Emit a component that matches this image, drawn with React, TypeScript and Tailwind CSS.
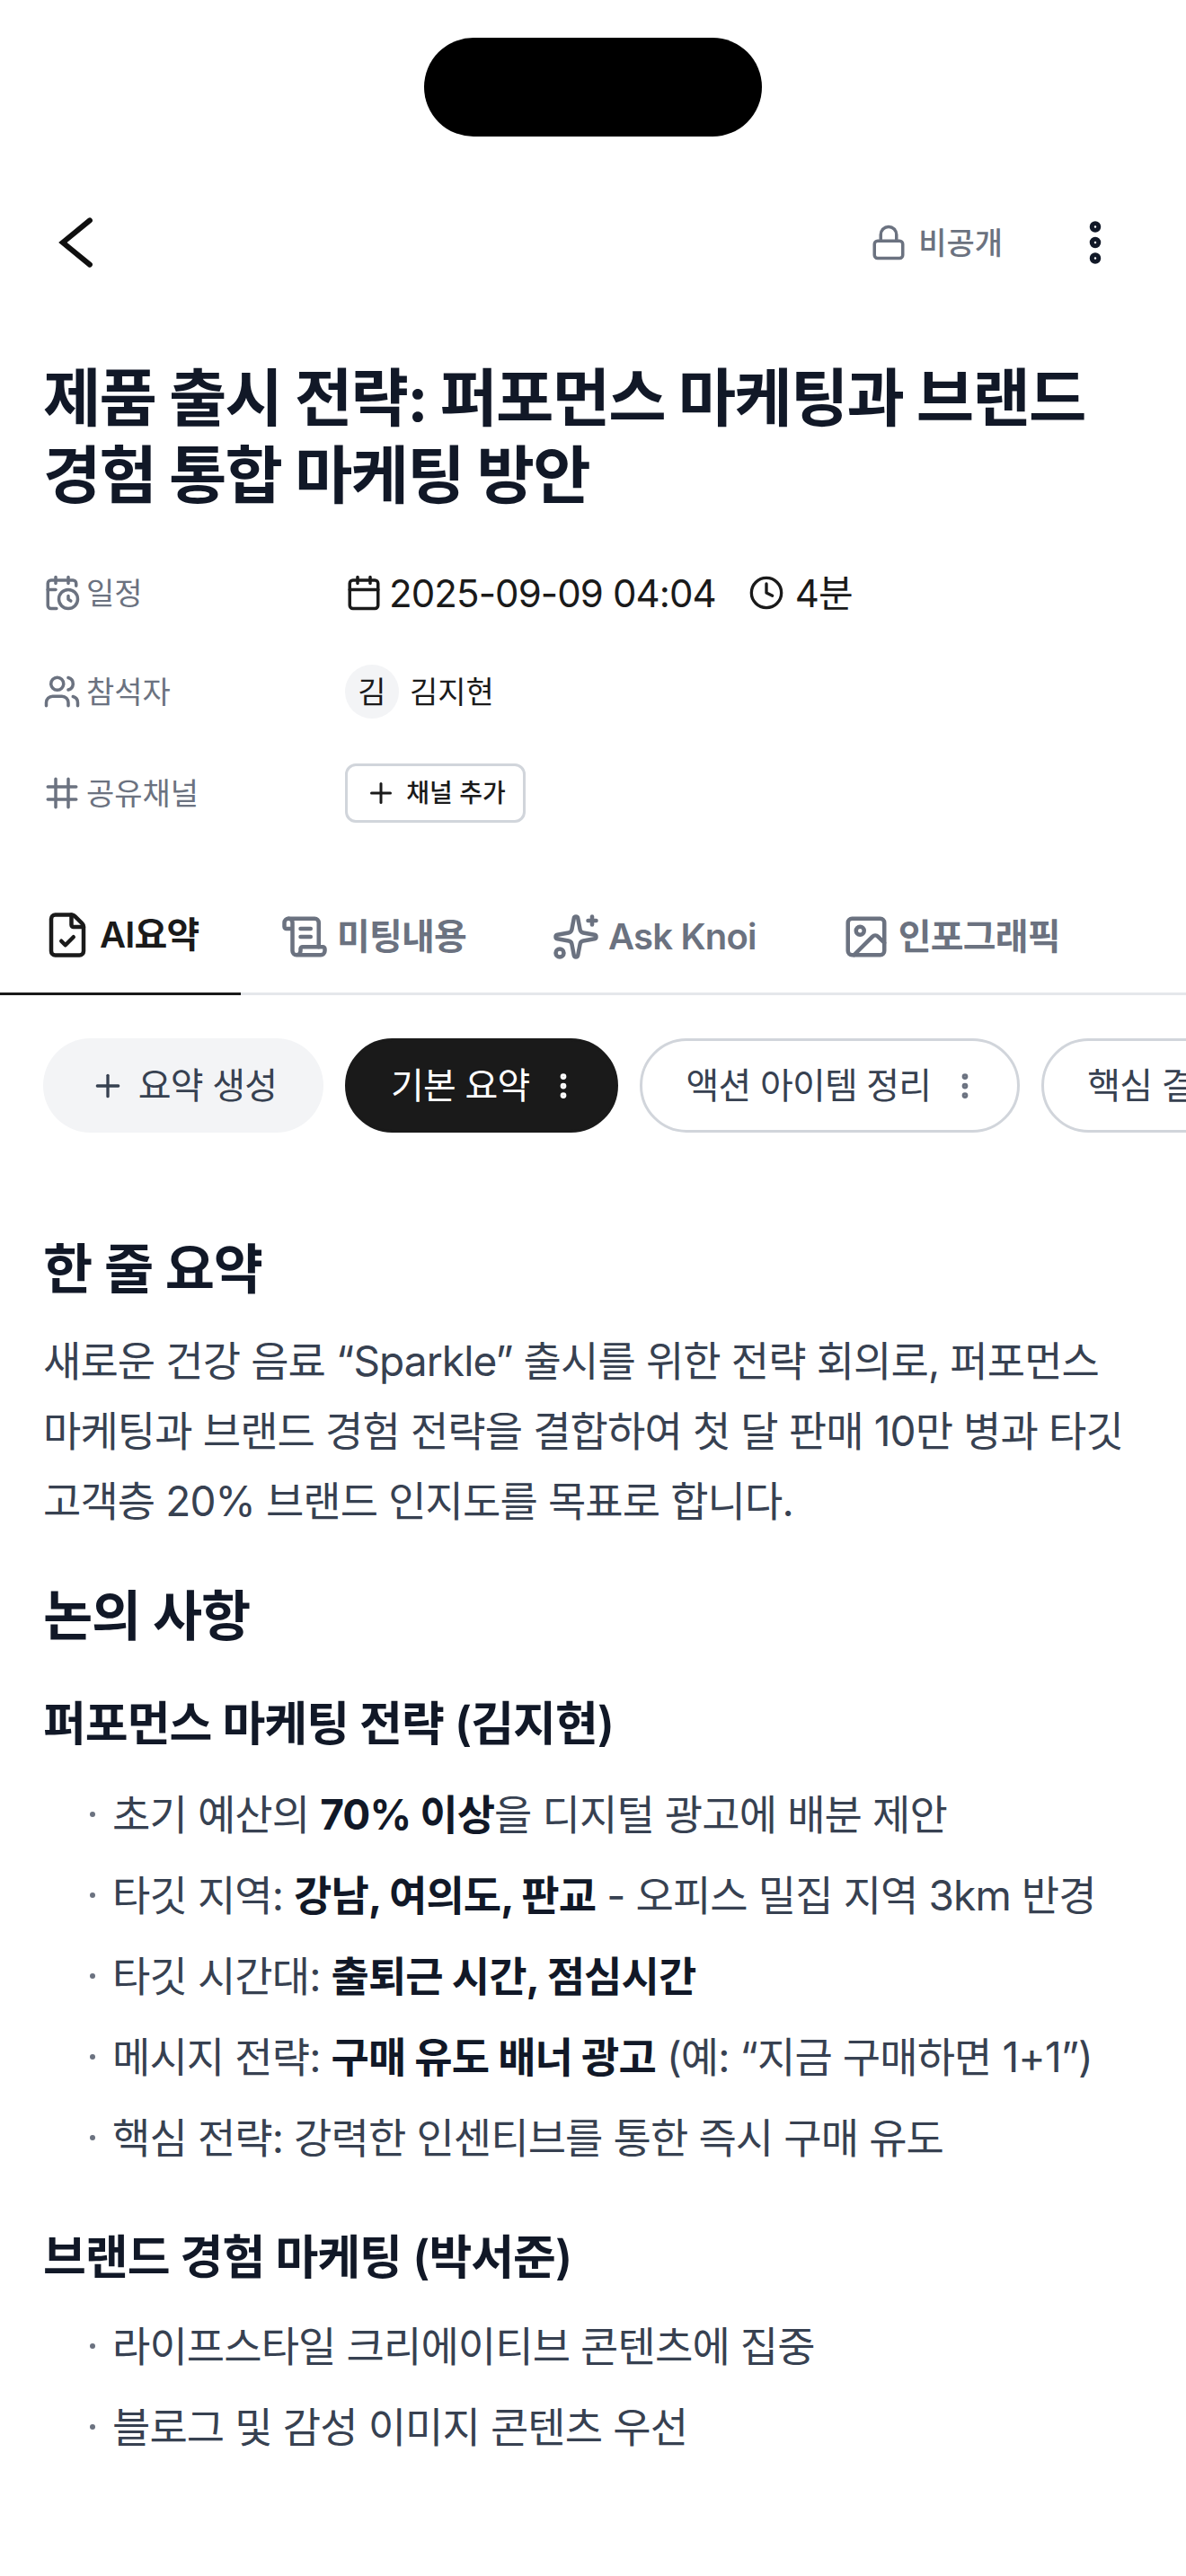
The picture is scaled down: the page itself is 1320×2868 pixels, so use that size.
import { Calendar, CalendarClock, Clock, EllipsisVertical, FileCheck, Image, Lock, Plus, ScrollText, Sparkles, Users } from "lucide-react";
import type { ReactNode } from "react";

const FONT = "font-['Inter','Noto_Sans_CJK_KR',sans-serif]";

function MetaRow({ icon, label, children, className = "" }: { icon: ReactNode; label: string; children: ReactNode; className?: string }) {
  return (
    <div className={`flex items-center ${className}`}>
      <div className="flex w-[336px] items-center gap-[6px] text-[34px] text-[#6b7280]">
        {icon}
        <span>{label}</span>
      </div>
      <div className="flex items-center">{children}</div>
    </div>
  );
}

function Tab({ icon, label, active = false, className = "" }: { icon: ReactNode; label: string; active?: boolean; className?: string }) {
  return (
    <div
      className={`flex h-[107px] items-center gap-[9px] pb-[24px] text-[40px] tracking-[-0.8px] font-semibold ${
        active ? "border-b-[3px] border-[#1a1a1a] text-[#1a1a1a]" : "text-[#6b7280]"
      } ${className}`}
    >
      {icon}
      <span>{label}</span>
    </div>
  );
}

function Chip({ label, active = false, className = "" }: { label: string; active?: boolean; className?: string }) {
  return (
    <div
      className={`flex h-[105px] shrink-0 items-center rounded-full border-[3px] pl-[48px] pr-[40px] text-[40px] tracking-[-0.8px] ${
        active ? "border-[#1a1a1a] bg-[#1a1a1a] text-white" : "border-[#d1d5db] text-[#374151]"
      } ${className}`}
    >
      <span>{label}</span>
      <EllipsisVertical size={36} strokeWidth={2.5} className={`ml-[20px] ${active ? "text-white" : "text-[#6b7280]"}`} />
    </div>
  );
}

function Bullet({ children }: { children: ReactNode }) {
  return (
    <li className="flex h-[90px] items-center pl-[100px] text-[46px] tracking-[-0.9px] text-[#374151]">
      <span className="mr-[19px] h-[6px] w-[6px] rounded-full bg-[#6b7280]" />
      <span className="whitespace-nowrap">{children}</span>
    </li>
  );
}

export default function App() {
  return (
    <div className={`relative h-[2868px] w-[1320px] overflow-hidden bg-white ${FONT}`}>
      <div className="flex justify-center pt-[42px]">
        <div className="h-[110px] w-[376px] rounded-[55px] bg-black" />
      </div>

      <header className="mt-[58px] flex h-[120px] items-center pl-[48px] pr-[48px]">
        <svg width="72" height="72" viewBox="0 0 24 24" fill="none" stroke="#0f0f0f" strokeWidth="2" strokeLinecap="round" strokeLinejoin="miter">
          <path d="M17.3 3.8 L7.3 12 L17.3 20.2" />
        </svg>
        <div className="ml-auto flex items-center gap-[12px] text-[34px] font-medium text-[#6b7280]">
          <Lock size={42} strokeWidth={2} />
          <span>비공개</span>
        </div>
        <EllipsisVertical size={60} strokeWidth={3} className="ml-[73px] mr-[23px] text-[#111827]" />
      </header>

      <h1 className="mt-[71px] px-[48px] text-[70px] font-bold leading-[86px] tracking-[-1.8px] text-[#111827]">
        제품 출시 전략: 퍼포먼스 마케팅과 브랜드
        <br />
        경험 통합 마케팅 방안
      </h1>

      <div className="mt-[57px] px-[48px]">
        <MetaRow className="h-[60px]" icon={<CalendarClock size={42} strokeWidth={2} />} label="일정">
          <Calendar size={42} strokeWidth={2} className="text-[#1a1a1a]" />
          <span className="ml-[7px] text-[42px] tracking-[-0.9px] text-[#1a1a1a]">2025-09-09 04:04</span>
          <Clock size={40} strokeWidth={2} className="ml-[36px] text-[#1a1a1a]" />
          <span className="ml-[12px] text-[42px] tracking-[-0.9px] text-[#1a1a1a]">4분</span>
        </MetaRow>
        <MetaRow className="mt-[50px] h-[60px]" icon={<Users size={42} strokeWidth={2} />} label="참석자">
          <div className="flex h-[60px] w-[60px] items-center justify-center rounded-full bg-[#f3f4f6] text-[34px] text-[#1a1a1a]">김</div>
          <span className="ml-[12px] text-[34px] text-[#1a1a1a]">김지현</span>
        </MetaRow>
        <MetaRow
          className="mt-[50px] h-[66px]"
          icon={
            <svg width="42" height="42" viewBox="0 0 24 24" fill="none" stroke="currentColor" strokeWidth="2" strokeLinecap="round">
              <path d="M8 3v18M16 3v18M3 8h18M3 16h18" />
            </svg>
          }
          label="공유채널"
        >
          <div className="flex h-[66px] w-[201px] items-center justify-center gap-[10px] rounded-[12px] border-[3px] border-[#d1d5db] text-[28px] font-medium text-[#1a1a1a]">
            <Plus size={36} strokeWidth={2} />
            <span>채널 추가</span>
          </div>
        </MetaRow>
      </div>

      <nav className="mt-[85px] flex h-[107px] items-start border-b-[3px] border-[#e5e7eb]">
        <Tab active className="w-[268px] pl-[48px]" icon={<FileCheck size={54} strokeWidth={2} />} label="AI요약" />
        <Tab className="ml-[44px]" icon={<ScrollText size={54} strokeWidth={2} />} label="미팅내용" />
        <Tab className="ml-[95px]" icon={<Sparkles size={54} strokeWidth={2} />} label="Ask Knoi" />
        <Tab className="ml-[95px]" icon={<Image size={54} strokeWidth={2} />} label="인포그래픽" />
      </nav>

      <div className="mt-[48px] flex gap-[24px] overflow-hidden pl-[48px]">
        <div className="flex h-[105px] w-[312px] shrink-0 items-center justify-center gap-[14px] rounded-full bg-[#f3f4f6] text-[40px] tracking-[-0.8px] text-[#374151]">
          <Plus size={40} strokeWidth={2} />
          <span>요약 생성</span>
        </div>
        <Chip active label="기본 요약" />
        <Chip label="액션 아이템 정리" />
        <Chip label="핵심 결정 사항" />
      </div>

      <main className="mt-[107px] px-[48px]">
        <h2 className="text-[60px] font-semibold leading-[90px] tracking-[-1.2px] text-[#111827]">한 줄 요약</h2>
        <p className="mt-[18px] text-[46px] leading-[78px] tracking-[-0.9px] text-[#374151]">
          새로운 건강 음료 “Sparkle” 출시를 위한 전략 회의로, 퍼포먼스
          <br />
          마케팅과 브랜드 경험 전략을 결합하여 첫 달 판매 10만 병과 타깃
          <br />
          고객층 20% 브랜드 인지도를 목표로 합니다.
        </p>
        <h2 className="mt-[44px] text-[60px] font-semibold leading-[90px] tracking-[-1.2px] text-[#111827]">논의 사항</h2>
        <h3 className="mt-[40px] text-[52px] font-semibold leading-[72px] tracking-[-1px] text-[#111827]">퍼포먼스 마케팅 전략 (김지현)</h3>
      </main>
      <ul className="mt-[19px]">
        <Bullet>초기 예산의 <b className="font-bold text-[#111827]">70% 이상</b>을 디지털 광고에 배분 제안</Bullet>
        <Bullet>타깃 지역: <b className="font-bold text-[#111827]">강남, 여의도, 판교</b> - 오피스 밀집 지역 3km 반경</Bullet>
        <Bullet>타깃 시간대: <b className="font-bold text-[#111827]">출퇴근 시간, 점심시간</b></Bullet>
        <Bullet>메시지 전략: <b className="font-bold text-[#111827]">구매 유도 배너 광고</b> (예: “지금 구매하면 1+1”)</Bullet>
        <Bullet>핵심 전략: 강력한 인센티브를 통한 즉시 구매 유도</Bullet>
      </ul>
      <h3 className="mt-[53px] px-[48px] text-[52px] font-semibold leading-[72px] tracking-[-1px] text-[#111827]">브랜드 경험 마케팅 (박서준)</h3>
      <ul className="mt-[17px]">
        <Bullet>라이프스타일 크리에이티브 콘텐츠에 집중</Bullet>
        <Bullet>블로그 및 감성 이미지 콘텐츠 우선</Bullet>
      </ul>
    </div>
  );
}
